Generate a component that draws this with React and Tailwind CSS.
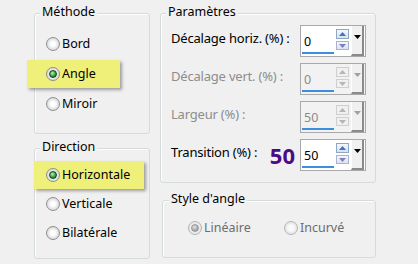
import React from "react";

const Radio = ({ checked, disabled }) => (
  <span
    className={
      "relative inline-flex h-[14px] w-[14px] shrink-0 items-center justify-center rounded-full border " +
      (disabled
        ? "border-[#b4b4b4] bg-[radial-gradient(circle,#fafafa_30%,#e2e2e2_75%,#d0d0d0)]"
        : "border-[#8e8f8f] bg-[radial-gradient(circle,#ffffff_25%,#d8d8d8_75%,#bcbcbc)]")
    }
  >
    {checked && (
      <span
        className={
          "h-[8px] w-[8px] rounded-full border " +
          (disabled
            ? "border-[#9a9a9a] bg-[radial-gradient(circle_at_40%_35%,#e6e6e6,#a8a8a8_60%,#8a8a8a)]"
            : "border-[#1b3d1f] bg-[radial-gradient(circle_at_40%_35%,#b8f5b0,#2fa83c_55%,#0f5a1a)]")
        }
      />
    )}
  </span>
);

const Row = ({ label, checked, hl, first }) => (
  <div
    className={
      "flex h-[28px] items-center gap-[2px] " +
      (hl
        ? `${first ? "-ml-[1px] w-[110px] pl-[12px]" : "-ml-[8px] w-[93px] pl-[19px]"} bg-[#eef079] shadow-[2px_2px_3px_rgba(0,0,0,0.35)]`
        : "pl-[11px]")
    }
  >
    <Radio checked={checked} />
    <span>{label}</span>
  </div>
);

const Arrow = ({ up, color }) => (
  <svg width="7" height="4" viewBox="0 0 7 4">
    <path d={up ? "M0 4 L3.5 0 L7 4 Z" : "M0 0 L7 0 L3.5 4 Z"} fill={color} />
  </svg>
);

const Spin = ({ value, disabled }) => (
  <div
    className={
      "flex h-[32px] w-[66px] shrink-0 border border-[#a9a9a9] " + (disabled ? "bg-[#f2f2f2]" : "bg-white")
    }
  >
    <div className="flex w-[35px] flex-col">
      <span className={"mt-[8px] pl-[3px] leading-[16px] " + (disabled ? "text-[#8a8a8a]" : "text-black")}>{value}</span>
      <div className="mt-auto mb-[2px] ml-[1px] h-[2px] w-[32px] bg-[#3b8fe0]" />
    </div>
    <div className="flex w-[13px] flex-col gap-[2px] pt-[3px]">
      <div
        className={
          "flex h-[10px] items-center justify-center border " +
          (disabled ? "border-[#cfcfcf] bg-[#f0f0f0]" : "border-[#8ea7c8] bg-[linear-gradient(#f4f8fc,#d6e3f2)]")
        }
      >
        <Arrow up color={disabled ? "#b5b5b5" : "#4d6fb0"} />
      </div>
      <div
        className={
          "flex h-[9px] items-center justify-center border " +
          (disabled ? "border-[#cfcfcf] bg-[#f0f0f0]" : "border-[#a9b3cf] bg-[linear-gradient(#f4f6fb,#dfe3f1)]")
        }
      >
        <Arrow color={disabled ? "#b5b5b5" : "#7b80c0"} />
      </div>
    </div>
    <div className="ml-[2px] flex h-[30px] w-[13px] justify-center border-r-2 border-b-2 border-[#8a8a8a] border-l border-l-white bg-[#f0f0f0] pt-[9px]">
      <Arrow color={disabled ? "#a0a0a0" : "#000"} />
    </div>
  </div>
);

const Title = ({ children, ml = "ml-[5px]" }) => (
  <div className={"-mt-[10px] w-fit bg-[#f0f0f0] px-[2px] leading-[16px] " + ml}>{children}</div>
);

const box = "rounded-[3px] border border-[#d5dadd] shadow-[inset_1px_1px_0_#ffffff]";

export default function App() {
  return (
    <div
      className="flex h-[264px] w-[418px] bg-[#f0f0f0] pl-[34px] text-[12.5px] text-black"
      style={{ fontFamily: '"Noto Sans", "Open Sans", sans-serif' }}
    >
      <div className="flex w-[116px] flex-col">
        <div className={"mt-[13px] h-[121px] " + box}>
          <Title>Méthode</Title>
          <div className="mt-[10px] flex flex-col gap-[2px]">
            <Row label="Bord" />
            <Row label="Angle" checked hl />
            <Row label="Miroir" />
          </div>
        </div>
        <div className={"mt-[14px] h-[111px] " + box}>
          <Title>Direction</Title>
          <div className="mt-[6px] flex flex-col gap-[1px]">
            <Row label="Horizontale" checked hl first />
            <Row label="Verticale" />
            <Row label="Bilatérale" />
          </div>
        </div>
      </div>

      <div className="ml-[10px] flex w-[216px] flex-col">
        <div className={"mt-[13px] h-[170px] " + box}>
          <Title>Paramètres</Title>
          <div className="mt-[5px] flex flex-col gap-[6px] pl-[10px]">
            <div className="flex h-[32px]">
              <span className="w-[129px] pt-[4px] text-[13px] tracking-[-0.2px]">Décalage horiz. (%) :</span>
              <Spin value="0" />
            </div>
            <div className="flex h-[32px]">
              <span className="w-[129px] pt-[4px] text-[13px] tracking-[-0.2px] text-[#8d8d8d]">Décalage vert. (%) :</span>
              <Spin value="0" disabled />
            </div>
            <div className="flex h-[32px]">
              <span className="w-[129px] pt-[4px] text-[13px] tracking-[-0.2px] text-[#8d8d8d]">Largeur (%) :</span>
              <Spin value="50" disabled />
            </div>
            <div className="flex h-[32px]">
              <div className="flex w-[129px] items-start justify-between pr-[5px]">
                <span className="pt-[4px] text-[13px] tracking-[-0.2px]">Transition (%) :</span>
                <span className="self-center text-[22px] leading-[26px] font-bold text-[#4b0b88]">50</span>
              </div>
              <Spin value="50" />
            </div>
          </div>
        </div>
        <div className={"ml-[2px] mt-[17px] h-[58px] " + box}>
          <Title ml="ml-[6px]">Style d'angle</Title>
          <div className="mt-[11px] flex h-[20px] items-center pl-[25px] text-[#6d6d6d]">
            <div className="flex w-[96px] items-center gap-[2px]">
              <Radio checked disabled />
              <span>Linéaire</span>
            </div>
            <div className="flex items-center gap-[2px]">
              <Radio disabled />
              <span>Incurvé</span>
            </div>
          </div>
        </div>
      </div>
    </div>
  );
}
